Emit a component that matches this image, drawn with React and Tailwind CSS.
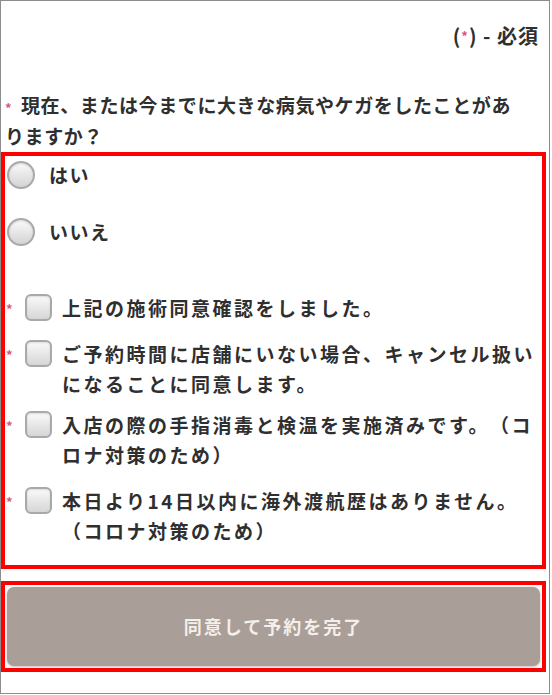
import React from "react";

const FONT = { fontFamily: '"Noto Sans CJK JP", "Noto Sans", sans-serif' };

function Star({ className = "" }) {
  return <span className={"text-[#d9577b] text-[13px] font-bold " + className}>*</span>;
}

function Radio({ label, className = "" }) {
  return (
    <div className={"flex items-center h-[28px] " + className}>
      <div className="ml-[2px] w-[28px] h-[28px] rounded-full border-2 border-[#a9a9a9] bg-linear-to-b from-[#fafafa] to-[#d4d4d4] shadow-[inset_0_1px_2px_rgba(0,0,0,0.15)]" />
      <span className="ml-[14px] text-[19px] leading-[28px] font-bold tracking-[1.5px] text-[#2f2f2f]">{label}</span>
    </div>
  );
}

function Check({ children, className = "" }) {
  return (
    <div className={"flex items-start " + className}>
      <div className="w-[20px] h-[30px] flex items-center justify-start pl-[1px]">
        <Star className="mt-[2px]" />
      </div>
      <div className="w-[27px] h-[27px] mt-[1px] rounded-[6px] border-2 border-[#a9a9a9] bg-linear-to-b from-[#fafafa] to-[#d6d6d6] shadow-[inset_0_1px_2px_rgba(0,0,0,0.12)] shrink-0" />
      <div className="ml-[10px] text-[19px] leading-[30px] font-bold tracking-[2.5px] text-[#2f2f2f] whitespace-nowrap [text-spacing-trim:space-all]">
        {children}
      </div>
    </div>
  );
}

export default function App() {
  return (
    <div style={FONT} className="w-[550px] h-[694px] border border-[#8c8c8c] bg-white">
      <div className="pt-[20px] h-[50px] flex justify-end pr-[10px] text-[20px] leading-[30px] font-bold text-[#2f2f2f] tracking-[1px]">
        <span>(</span>
        <span className="text-[#d9577b] text-[13px]">*</span>
        <span>)&nbsp;-&nbsp;必須</span>
      </div>
      <div className="mt-[40px] pl-[4px] text-[19px] leading-[28px] font-bold tracking-[0.6px] text-[#2f2f2f] whitespace-nowrap [text-spacing-trim:space-all]">
        <span className="inline-block w-[16px]">
          <Star />
        </span>
        現在、または今までに大きな病気やケガをしたことがあ
        <br />
        りますか？
      </div>
      <div className="mt-[2px] w-[545px] h-[417px] border-4 border-[#ff0000] pt-[5px]">
        <Radio label="はい" />
        <Radio label="いいえ" className="mt-[29px]" />
        <Check className="mt-[47px]">上記の施術同意確認をしました。</Check>
        <Check className="mt-[16px]">
          ご予約時間に店舗にいない場合、キャンセル扱い
          <br />
          になることに同意します。
        </Check>
        <Check className="mt-[11px]">
          入店の際の手指消毒と検温を実施済みです。（コ
          <br />
          ロナ対策のため）
        </Check>
        <Check className="mt-[16px]">
          本日より14日以内に海外渡航歴はありません。
          <br />
          （コロナ対策のため）
        </Check>
      </div>
      <div className="mt-[12px] w-[545px] h-[91px] border-4 border-[#ff0000] p-[2px]">
        <button className="w-full h-full rounded-[7px] bg-[#a99e98] shadow-[0_1px_3px_rgba(0,0,0,0.25)] text-[#f4efea] text-[18px] font-bold tracking-[2px] flex items-center justify-center">
          同意して予約を完了
        </button>
      </div>
    </div>
  );
}
